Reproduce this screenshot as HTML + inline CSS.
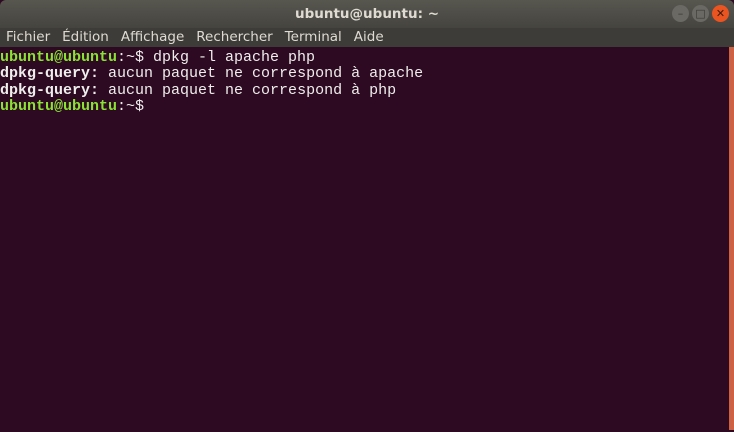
<!DOCTYPE html>
<html><head><meta charset="utf-8"><style>
body{margin:0;width:734px;height:430px;overflow:hidden;background:#2c0a22;font-family:"DejaVu Sans","Liberation Sans",sans-serif}
#title{position:absolute;left:0;top:0;width:734px;height:28px;background:linear-gradient(#57564f,#45443f);border-radius:6px 6px 0 0;color:#dfdbd2;font-weight:bold;font-size:13.5px;text-align:center;line-height:28px}
#menu{position:absolute;left:0;top:28px;width:734px;height:19px;background:#3d3c38;color:#dfdbd2;font-size:13.5px;line-height:19px}
#menu span{margin-left:6px;margin-right:6px}
#term{position:absolute;left:0;top:48px;width:729px;height:382px;background:#2d0922;font-family:"Liberation Mono","DejaVu Sans Mono",monospace;font-size:15px;line-height:16.3px;color:#eeeeec;white-space:pre;padding-top:2px}
#strip{position:absolute;left:729px;top:47px;width:5px;height:383px;background:#cc6143}
.g{color:#8ae234;font-weight:bold}.b{font-weight:bold}
.btn{position:absolute;top:5px;width:17px;height:17px;border-radius:50%;background:#6a6964;color:#3a3935;font-size:11px;line-height:17px;text-align:center;font-weight:normal}
</style></head><body>
<div id="title">ubuntu@ubuntu: ~
<div class="btn" style="left:672px">&#8211;</div>
<div class="btn" style="left:692px">&#9633;</div>
<div class="btn" style="left:712px;background:#e95420;color:#3a1a10">&#10005;</div>
</div>
<div id="menu"><span>Fichier</span><span>Édition</span><span>Affichage</span><span>Rechercher</span><span>Terminal</span><span>Aide</span></div>
<div id="term"><span class="g">ubuntu@ubuntu</span>:~$ dpkg -l apache php
<span class="b">dpkg-query:</span> aucun paquet ne correspond à apache
<span class="b">dpkg-query:</span> aucun paquet ne correspond à php
<span class="g">ubuntu@ubuntu</span>:~$ </div>
<div id="strip"></div>
</body></html>
